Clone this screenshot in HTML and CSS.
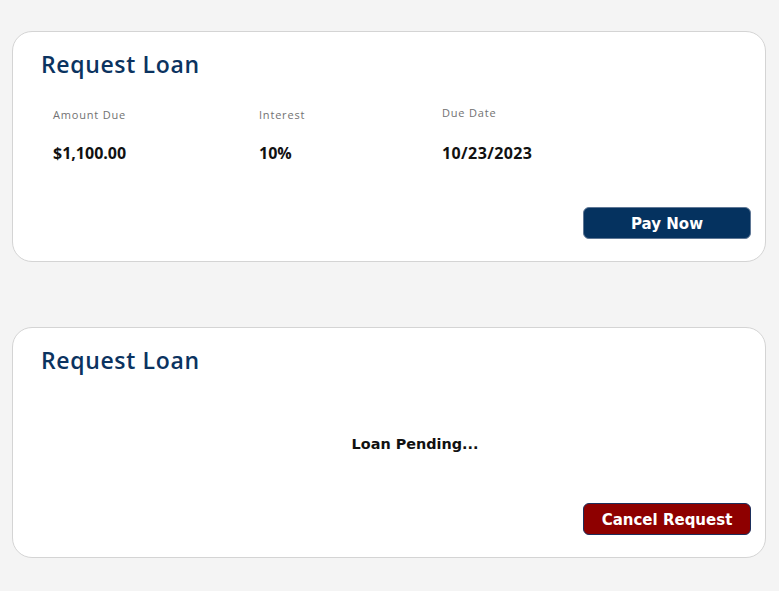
FILE: index.html
```html
<!DOCTYPE html>
<html>
<head>
<meta charset="utf-8">
<link rel="stylesheet" href="styles.css">
</head>
<body>
<main class="page">
  <section class="card">
    <h2 class="card-title">Request Loan</h2>
    <div class="details">
      <div class="detail">
        <div class="label">Amount Due</div>
        <div class="value">$1,100.00</div>
      </div>
      <div class="detail">
        <div class="label">Interest</div>
        <div class="value">10%</div>
      </div>
      <div class="detail detail-date">
        <div class="label">Due Date</div>
        <div class="value value-date">10/23/2023</div>
      </div>
    </div>
    <div class="actions actions-first">
      <button class="btn btn-primary">Pay Now</button>
    </div>
  </section>

  <section class="card">
    <h2 class="card-title">Request Loan</h2>
    <div class="pending">Loan Pending...</div>
    <div class="actions actions-second">
      <button class="btn btn-danger">Cancel Request</button>
    </div>
  </section>
</main>
</body>
</html>
```

FILE: styles.css
```css
* { box-sizing: border-box; }

html, body {
  margin: 0;
  padding: 0;
  background: #f4f4f4;
}

.page {
  padding: 31px 13px 0 12px;
  display: flex;
  flex-direction: column;
  gap: 65px;
}

.card {
  background: #ffffff;
  border: 1px solid #d4d4d4;
  border-radius: 20px;
  padding: 18px 14px 22px 28px;
  display: flex;
  flex-direction: column;
}

.card-title {
  margin: 0;
  font-family: "Open Sans", sans-serif;
  font-weight: 600;
  font-size: 23px;
  line-height: 28px;
  color: #0b3360;
  letter-spacing: 0.65px;
}

.details {
  display: grid;
  grid-template-columns: 206px 183px 1fr;
  padding-left: 12px;
  margin-top: 30px;
}

.detail {
  display: flex;
  flex-direction: column;
}

.label {
  font-family: "Open Sans", sans-serif;
  font-size: 11px;
  line-height: 14px;
  color: #727272;
  letter-spacing: 0.8px;
}

.detail-date .label { margin-top: -2px; margin-bottom: 2px; }

.value {
  margin-top: 21px;
  font-family: "Open Sans", sans-serif;
  font-weight: 700;
  font-size: 16px;
  line-height: 20px;
  color: #111111;
}

.value-date { letter-spacing: 0.4px; }

.actions {
  display: flex;
  justify-content: flex-end;
}

.actions-first { margin-top: 44px; }
.actions-second { margin-top: 49px; }

.pending {
  margin-top: 60px;
  padding-left: 38px;
  text-align: center;
  font-family: "DejaVu Sans", sans-serif;
  font-weight: 700;
  font-size: 14.4px;
  line-height: 20px;
  color: #111111;
}

.btn {
  width: 168px;
  height: 32px;
  border-radius: 6px;
  font-family: "DejaVu Sans", sans-serif;
  font-weight: 700;
  font-size: 15px;
  color: #ffffff;
  padding: 2px 0 0 0;
}

.btn-primary {
  background: #05325f;
  border: 1px solid #5f7795;
}

.btn-danger {
  background: #8e0000;
  border: 1px solid #1c2f5c;
}
```
